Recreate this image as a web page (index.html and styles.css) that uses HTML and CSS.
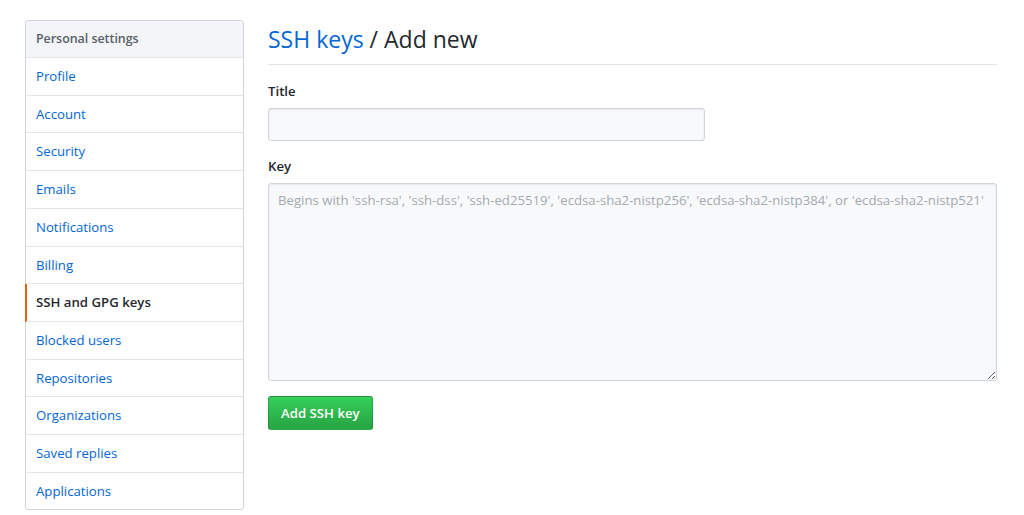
FILE: index.html
```html
<!DOCTYPE html>
<html>
<head>
<meta charset="utf-8">
<link rel="stylesheet" href="styles.css">
</head>
<body>
<div class="page">
  <nav class="menu">
    <div class="menu-heading">Personal settings</div>
    <a class="menu-item" href="#">Profile</a>
    <a class="menu-item" href="#">Account</a>
    <a class="menu-item" href="#">Security</a>
    <a class="menu-item" href="#">Emails</a>
    <a class="menu-item" href="#">Notifications</a>
    <a class="menu-item" href="#">Billing</a>
    <a class="menu-item selected" href="#">SSH and GPG keys</a>
    <a class="menu-item" href="#">Blocked users</a>
    <a class="menu-item" href="#">Repositories</a>
    <a class="menu-item" href="#">Organizations</a>
    <a class="menu-item" href="#">Saved replies</a>
    <a class="menu-item last" href="#">Applications</a>
  </nav>
  <main class="main">
    <h2 class="subhead"><a href="#">SSH keys</a> / Add new</h2>
    <form class="form">
      <div class="form-group">
        <label class="label">Title</label>
        <input class="input title-input" type="text">
      </div>
      <div class="form-group">
        <label class="label">Key</label>
        <textarea class="input key-input" placeholder="Begins with 'ssh-rsa', 'ssh-dss', 'ssh-ed25519', 'ecdsa-sha2-nistp256', 'ecdsa-sha2-nistp384', or 'ecdsa-sha2-nistp521'"></textarea>
      </div>
      <button class="btn-primary" type="button">Add SSH key</button>
    </form>
  </main>
</div>
</body>
</html>
```
FILE: styles.css
```css
html, body {
  margin: 0;
  padding: 0;
  background: #fff;
}
body {
  font-family: "Open Sans", "Noto Sans", "Liberation Sans", sans-serif;
  font-size: 13.2px;
  color: #24292e;
}
.page {
  display: flex;
  gap: 24px;
  padding: 20px 27px 0 25px;
}
.menu {
  width: 217px;
  flex: none;
  border: 1px solid #d1d5da;
  border-radius: 3px;
  display: flex;
  flex-direction: column;
}
.menu-heading {
  padding: 8px 10px;
  line-height: 20px;
  font-size: 12.4px;
  font-weight: 600;
  color: #586069;
  background: #f3f5f8;
  border-bottom: 1px solid #e1e4e8;
  border-radius: 3px 3px 0 0;
}
.menu-item {
  padding: 8px 10px 8px 9px;
  line-height: 20.7px;
  color: #0366d6;
  text-decoration: none;
  border-bottom: 1px solid #e1e4e8;
  border-left: 2px solid transparent;
  margin-left: -1px;
}
.menu-item.last {
  border-bottom: none;
}
.menu-item.selected {
  color: #24292e;
  font-weight: 600;
  border-left-color: #e36209;
}
.main {
  flex: 1;
  min-width: 0;
}
.subhead {
  margin: 0;
  padding: 4px 0 10px;
  font-size: 23px;
  font-weight: 400;
  line-height: 30px;
  border-bottom: 1px solid #e1e4e8;
  color: #24292e;
}
.subhead a {
  color: #0366d6;
  text-decoration: none;
}
.form {
  padding-top: 16px;
}
.form-group {
  margin-bottom: 15px;
}
.label {
  display: block;
  font-weight: 600;
  line-height: 20px;
  margin-bottom: 7px;
}
.input {
  display: block;
  box-sizing: border-box;
  font-family: inherit;
  font-size: 13.2px;
  color: #24292e;
  background: #f8f9fb;
  border: 1px solid #d1d5da;
  border-radius: 3px;
  box-shadow: inset 0 1px 2px rgba(27,31,35,0.075);
  padding: 6px 8px;
  line-height: 20px;
}
.title-input {
  width: 437px;
  height: 33px;
}
.key-input {
  width: 100%;
  height: 198px;
  padding: 6px 9px;
  resize: vertical;
}
.key-input::placeholder {
  color: #a3aab1;
}
.btn-primary {
  font-family: inherit;
  font-size: 13.2px;
  font-weight: 600;
  color: #fff;
  line-height: 20px;
  padding: 6px 12px;
  border: 1px solid rgba(27,31,35,0.2);
  border-radius: 3px;
  background: linear-gradient(#34d058, #28a745 90%);
  cursor: pointer;
}
```
